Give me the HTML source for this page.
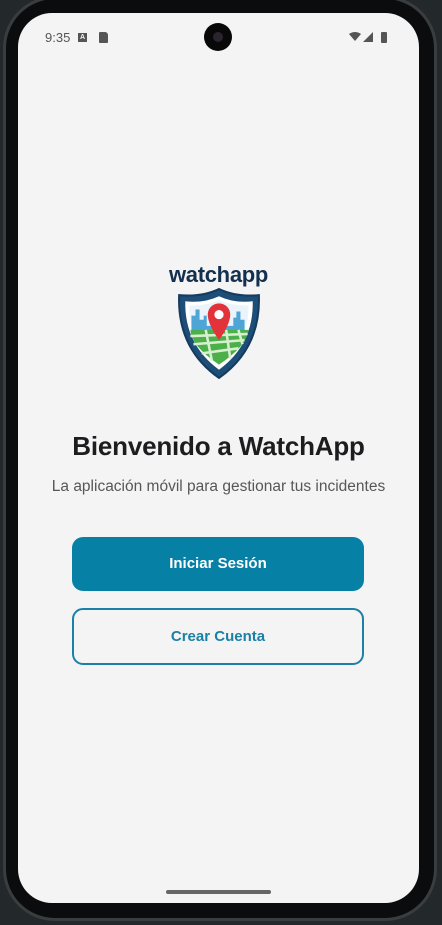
<!DOCTYPE html>
<html><head><meta charset="utf-8"><style>
*{margin:0;padding:0;box-sizing:border-box}
html,body{width:442px;height:925px;overflow:hidden;background:#23282b;font-family:"Liberation Sans",sans-serif}
.frame{position:absolute;left:3px;top:-4px;width:434px;height:925px;border-radius:52px;background:#0b0c0d;border:3px solid #3a3d40}
.screen{position:absolute;left:18px;top:13px;width:401px;height:890px;border-radius:34px;background:#f4f4f4;overflow:hidden}
.abs{position:absolute}
</style></head><body>
<div class="frame"></div>
<div class="screen">
  <div class="abs" style="left:27px;top:17px;font-size:13px;color:#555">9:35</div>
  <div class="abs" style="left:60px;top:20px;width:9px;height:9px;background:#555;color:#f4f4f4;font-size:7px;font-weight:bold;text-align:center;line-height:9px">A</div>
  <div class="abs" style="left:81px;top:19px;width:9px;height:11px;background:#555;border-radius:1px 3px 1px 1px"></div>
  <div class="abs" style="left:186px;top:10px;width:28px;height:28px;border-radius:50%;background:#080808"></div>
  <div class="abs" style="left:195px;top:19px;width:10px;height:10px;border-radius:50%;background:#2a2430"></div>
  <svg class="abs" style="left:331px;top:18px" width="42" height="14" viewBox="0 0 42 14">
    <path d="M0 3 Q6 -1 12 3 L6 10 Z" fill="#555"/>
    <path d="M14 11 L24 1 L24 11 Z" fill="#555"/>
    <rect x="32" y="1" width="6" height="11" rx="1" fill="#555"/>
  </svg>
  <div class="abs" style="left:0;top:249px;width:401px;text-align:center;font-size:22px;font-weight:bold;color:#14304f;letter-spacing:-0.3px">watchapp</div>
  <svg class="abs" style="left:157px;top:274px" width="88" height="94" viewBox="0 0 86 92">
    <path d="M43 2 Q60 10 82 8 Q84 60 43 89 Q2 60 4 8 Q26 10 43 2Z" fill="#1d4e78" stroke="#163b5e" stroke-width="2"/>
    <path d="M43 9 Q58 16 76 14 Q77 56 43 81 Q9 56 10 14 Q28 16 43 9Z" fill="#fff"/>
    <path d="M43 13 Q57 19 72 18 Q72 54 43 76 Q14 54 14 18 Q29 19 43 13Z" fill="#eaf4fa"/>
    <path d="M16 28h4v-6h4v10h4v-4h3v10h26v-8h3v-6h4v8h4v12H16Z" fill="#4fa6d6"/>
    <path d="M15 42 L72 42 Q70 58 43 76 Q16 58 15 42Z" fill="#4bb04a"/>
    <path d="M15 48 L71 46 M18 56 L68 52 M26 65 L62 60 M30 42 L36 72 M50 42 L54 70 M62 42 L66 56" stroke="#d8efcf" stroke-width="2.5" fill="none"/>
    <path d="M43 52 Q32 36 32 27 A11 11 0 0 1 54 27 Q54 36 43 52Z" fill="#e2323a"/>
    <circle cx="43" cy="27" r="4.5" fill="#fff"/>
  </svg>
  <div class="abs" style="left:0;top:418px;width:401px;text-align:center;font-size:26px;font-weight:bold;color:#1d1d20;letter-spacing:-0.2px">Bienvenido a WatchApp</div>
  <div class="abs" style="left:0;top:465px;width:401px;text-align:center;font-size:15.5px;color:#575757">La aplicación móvil para gestionar tus incidentes</div>
  <div class="abs" style="left:54px;top:524px;width:292px;height:54px;border-radius:11px;background:#0780a6;color:#fff;font-weight:bold;font-size:15px;text-align:center;line-height:54px">Iniciar Sesión</div>
  <div class="abs" style="left:54px;top:595px;width:292px;height:57px;border-radius:11px;border:2px solid #1c80a6;color:#1c80a6;font-weight:bold;font-size:15px;text-align:center;line-height:53px">Crear Cuenta</div>
  <div class="abs" style="left:148px;top:877px;width:105px;height:4px;border-radius:2px;background:#666"></div>
</div>
</body></html>
